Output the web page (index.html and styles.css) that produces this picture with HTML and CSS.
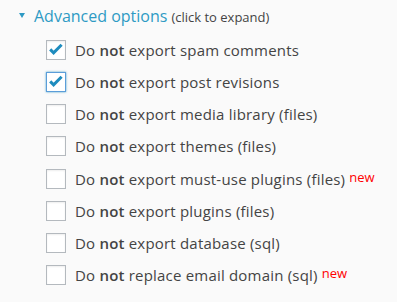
FILE: index.html
```html
<!DOCTYPE html>
<html lang="en">
<head>
    <meta charset="UTF-8">
    <title>Advanced options</title>
    <link rel="stylesheet" href="styles.css">
</head>
<body>
    <div class="panel">
        <div class="toggle">
            <span class="arrow"></span>
            <span class="title">Advanced options</span>
            <span class="hint">(click to expand)</span>
        </div>
        <ul class="options">
            <li><span class="box"><svg viewBox="0 0 18 18"><path d="M3.2 8.4 L6.6 11.8 L14.6 3.8" /></svg></span>Do <b>not</b> export spam comments</li>
            <li><span class="box focus"><svg viewBox="0 0 18 18"><path d="M3.2 8.4 L6.6 11.8 L14.6 3.8" /></svg></span>Do <b>not</b> export post revisions</li>
            <li><span class="box"></span>Do <b>not</b> export media library (files)</li>
            <li><span class="box"></span>Do <b>not</b> export themes (files)</li>
            <li><span class="box"></span>Do <b>not</b> export must-use plugins (files) <span class="new">new</span></li>
            <li><span class="box"></span>Do <b>not</b> export plugins (files)</li>
            <li><span class="box"></span>Do <b>not</b> export database (sql)</li>
            <li><span class="box"></span>Do <b>not</b> replace email domain (sql) <span class="new">new</span></li>
        </ul>
    </div>
</body>
</html>
```

FILE: styles.css
```css
body {
    margin: 0;
    background: #fafafa;
    font-family: 'Open Sans', sans-serif;
    color: #444;
}
.panel {
    padding: 5px 0 0 19px;
}
.toggle {
    display: flex;
    align-items: baseline;
    height: 24px;
}
.arrow {
    width: 0;
    height: 0;
    border-left: 3.5px solid transparent;
    border-right: 3.5px solid transparent;
    border-top: 5px solid #2e9ac4;
    margin-right: 9px;
    position: relative;
    top: -4px;
}
.title {
    font-size: 16px;
    color: #2e9ac4;
    margin-right: 4px;
}
.hint {
    font-size: 13px;
    color: #444;
}
.options {
    list-style: none;
    margin: 5px 0 0 27px;
    padding: 0;
}
.options li {
    display: flex;
    align-items: center;
    height: 32.15px;
    font-size: 15px;
    letter-spacing: 0.2px;
    white-space: pre;
}
.options b {
    font-weight: 600;
}
.box {
    box-sizing: border-box;
    flex: none;
    width: 20px;
    height: 20px;
    border: 1px solid #b4b9be;
    background: #fff;
    box-shadow: inset 0 1px 2px rgba(0, 0, 0, 0.07);
    margin-right: 9px;
    display: flex;
}
.box.focus {
    border-color: #5b9dd9;
    box-shadow: 0 0 2px rgba(30, 140, 190, 0.8);
}
.box svg {
    width: 18px;
    height: 18px;
}
.box path {
    fill: none;
    stroke: #1e8cbe;
    stroke-width: 3;
}
.new {
    color: #f00;
    font-size: 13px;
    letter-spacing: 0;
    position: relative;
    top: -2px;
}
```
